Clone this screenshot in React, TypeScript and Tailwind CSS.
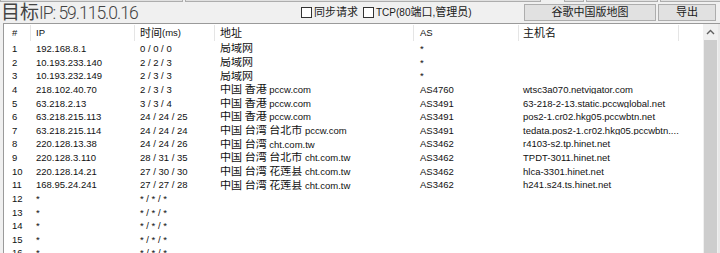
import React from "react";

type Row = [string, string, string, string, string, string];

const rows: Row[] = [
  ["1", "192.168.8.1", "0 / 0 / 0", "局域网", "*", ""],
  ["2", "10.193.233.140", "2 / 2 / 3", "局域网", "*", ""],
  ["3", "10.193.232.149", "2 / 3 / 3", "局域网", "*", ""],
  ["4", "218.102.40.70", "2 / 3 / 3", "中国 香港 pccw.com", "AS4760", "wtsc3a070.netvigator.com"],
  ["5", "63.218.2.13", "3 / 3 / 4", "中国 香港 pccw.com", "AS3491", "63-218-2-13.static.pccwglobal.net"],
  ["6", "63.218.215.113", "24 / 24 / 25", "中国 香港 pccw.com", "AS3491", "pos2-1.cr02.hkg05.pccwbtn.net"],
  ["7", "63.218.215.114", "24 / 24 / 24", "中国 台湾 台北市 pccw.com", "AS3491", "tedata.pos2-1.cr02.hkg05.pccwbtn...."],
  ["8", "220.128.13.38", "24 / 24 / 26", "中国 台湾 cht.com.tw", "AS3462", "r4103-s2.tp.hinet.net"],
  ["9", "220.128.3.110", "28 / 31 / 35", "中国 台湾 台北市 cht.com.tw", "AS3462", "TPDT-3011.hinet.net"],
  ["10", "220.128.14.21", "27 / 30 / 30", "中国 台湾 花莲县 cht.com.tw", "AS3462", "hlca-3301.hinet.net"],
  ["11", "168.95.24.241", "27 / 27 / 28", "中国 台湾 花莲县 cht.com.tw", "AS3462", "h241.s24.ts.hinet.net"],
  ["12", "*", "* / * / *", "", "", ""],
  ["13", "*", "* / * / *", "", "", ""],
  ["14", "*", "* / * / *", "", "", ""],
  ["15", "*", "* / * / *", "", "", ""],
  ["16", "*", "* / * / *", "", "", ""],
];

// column widths in px: #, IP, time, address, AS, host
const cols = ["w-[27px] pl-[8px]", "w-[104px] pl-[5px]", "w-[80px] pl-[5px]", "w-[199px] pl-[5px]", "w-[105px] pl-[6px]", "w-[160px] pl-[4px]"];

const CJK = /([\u3000-\u9fff\uff00-\uffef]+)/;

// CJK runs get a slightly larger size than the latin text around them
function Mixed({ text, cjk = "text-[11px]" }: { text: string; cjk?: string }) {
  return (
    <>
      {text.split(CJK).map((part, i) =>
        CJK.test(part) ? (
          <span key={i} className={cjk}>
            {part}
          </span>
        ) : (
          <span key={i}>{part}</span>
        )
      )}
    </>
  );
}

function Checkbox({ label }: { label: string }) {
  return (
    <label className="flex items-center gap-[2px] text-[10px] text-[#1a1a1a]">
      <span className="h-[11px] w-[11px] border border-[#333] bg-white" />
      <span>
        <Mixed text={label} />
      </span>
    </label>
  );
}

function Button({ children, className }: { children: React.ReactNode; className: string }) {
  return (
    <button
      className={
        "h-[17px] border border-[#adadad] bg-[#e1e1e1] text-[11px] leading-none text-[#1a1a1a] " + className
      }
    >
      {children}
    </button>
  );
}

export default function App() {
  return (
    <div
      className="flex h-[253px] w-[720px] flex-col overflow-hidden bg-[#f0f0f0] text-[9.5px] text-[#111]"
      style={{ fontFamily: '"Liberation Sans", "Noto Sans CJK SC", sans-serif' }}
    >
      {/* bottoms of buttons from the row above */}
      <div className="flex h-[2px] gap-[2px]">
        <div className="w-[183px] border-b border-x border-[#adadad] bg-[#e1e1e1]" />
        <div className="w-[356px] border-b border-x border-[#adadad] bg-[#e1e1e1]" />
        <div className="ml-[21px] w-[20px] border-b border-x border-[#adadad] bg-[#e1e1e1]" />
        <div className="w-[72px] border-b border-x border-[#adadad] bg-[#e1e1e1]" />
        <div className="flex-1 border-b border-l border-[#adadad] bg-[#e1e1e1]" />
      </div>

      <div className="flex h-[21px] items-center">
        <div className="ml-[1px] flex w-[130px] shrink-0 items-baseline whitespace-nowrap text-[#444]">
          <span className="text-[19px] leading-none">目标</span>
          <span
            className="text-[17.5px] leading-none tracking-[-1px]"
            style={{ fontFamily: "Roboto, sans-serif", fontWeight: 300 }}
          >
            IP: 59.115.0.16
          </span>
        </div>
        <div className="ml-[170px] flex items-center gap-[5px]">
          <Checkbox label="同步请求" />
          <Checkbox label="TCP(80端口,管理员)" />
        </div>
        <Button className="ml-auto w-[132px]">谷歌中国版地图</Button>
        <Button className="ml-[2px] mr-[4px] w-[58px]">导出</Button>
      </div>

      <div className="ml-[3px] flex min-h-0 flex-1 border-l border-t border-[#9a9a9a] bg-white">
        <div className="flex-1">
          <div className="flex h-[18px] items-center">
            {["#", "IP", "时间(ms)", "地址", "AS", "主机名"].map((h, i) => (
              <div key={h} className={"relative flex h-full items-center " + cols[i]}>
                <Mixed text={h} />
                <span className="absolute right-0 top-[1px] h-[16px] w-px bg-[#e5e5e5]" />
              </div>
            ))}
          </div>
          {rows.map((r) => (
            <div key={r[0]} className="flex h-[13.64px] items-center whitespace-nowrap leading-none">
              {r.map((c, i) => (
                <div key={i} className={"overflow-hidden " + cols[i]}>
                  <Mixed text={c} />
                </div>
              ))}
            </div>
          ))}
        </div>
        <div className="flex w-[17px] flex-col border-r-2 border-[#e8e8e8] bg-[#f0f0f0]">
          <div className="flex h-[16px] items-center justify-center">
            <svg width="9" height="6" viewBox="0 0 9 6">
              <path d="M1 5 L4.5 1.5 L8 5" fill="none" stroke="#606060" strokeWidth="1.4" />
            </svg>
          </div>
          <div className="mx-[1px] flex-1 bg-[#cdcdcd]" />
        </div>
      </div>
    </div>
  );
}
